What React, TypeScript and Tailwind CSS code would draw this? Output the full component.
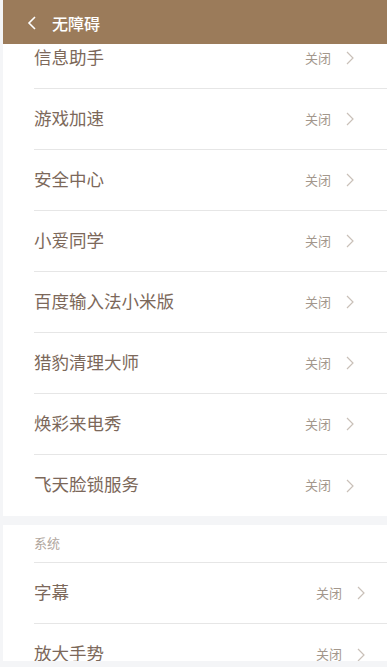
import React from "react";

const font = { fontFamily: '"Noto Sans CJK SC", "Noto Sans", sans-serif' };

function Chevron() {
  return (
    <svg width="8" height="14" viewBox="0 0 8 14" className="shrink-0">
      <polyline points="1,1 7,7 1,13" fill="none" stroke="#c9c0b8" strokeWidth="1.2" />
    </svg>
  );
}

function Row({ label, last, pr }: { label: string; last?: boolean; pr: string }) {
  return (
    <div className={`ml-[31px] h-[61px] flex items-center ${pr} ${last ? "" : "border-b border-[#e6e6e6]"}`}>
      <span className="flex-1 text-[17.5px] text-[#7c685a] leading-none pb-[3px]">{label}</span>
      <span className="text-[13px] text-[#a3978c] leading-none mr-[15px] pb-[2px]">关闭</span>
      <Chevron />
    </div>
  );
}

export default function App() {
  const apps = ["信息助手", "游戏加速", "安全中心", "小爱同学", "百度输入法小米版", "猎豹清理大师", "焕彩来电秀", "飞天脸锁服务"];
  return (
    <div className="w-[387px] h-[667px] bg-[#f4f5f7] overflow-hidden pl-[3px]" style={font}>
      <div className="h-[661px] overflow-hidden flex flex-col">
        <div className="relative z-10 h-[44px] shrink-0 bg-[#9b7b5a] flex items-center">
          <svg width="10" height="16" viewBox="0 0 10 16" className="ml-[24px] mt-[2px]">
            <polyline points="8,2 2,8 8,14" fill="none" stroke="#ffffff" strokeWidth="1.6" />
          </svg>
          <span className="ml-[15px] mt-[2px] text-[16px] text-white font-medium leading-none">无障碍</span>
        </div>
        <div className="-mt-[16px] bg-white">
          {apps.map((a, i) => (
            <Row key={a} label={a} last={i === apps.length - 1} pr="pr-[33px]" />
          ))}
        </div>
        <div className="mt-[9px] bg-white">
          <div className="ml-[31px] h-[38px] border-b border-[#e6e6e6] flex items-center">
            <span className="text-[13px] text-[#b0a69d] leading-none pb-[2px]">系统</span>
          </div>
          <Row label="字幕" pr="pr-[22px]" />
          <Row label="放大手势" last pr="pr-[22px]" />
        </div>
      </div>
    </div>
  );
}
